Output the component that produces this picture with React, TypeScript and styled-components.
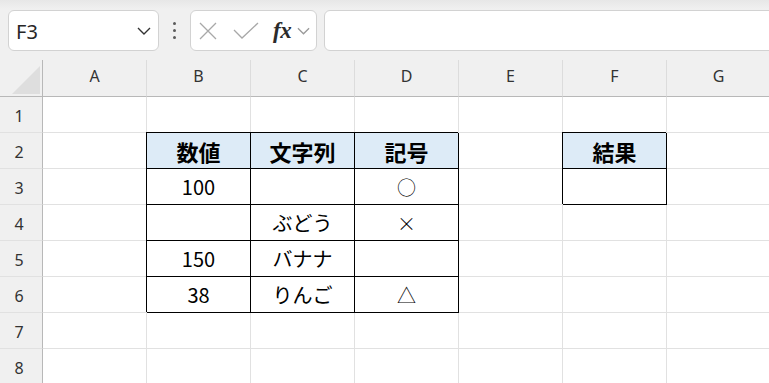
import React from "react"
import styled, { createGlobalStyle } from "styled-components"

const GlobalStyle = createGlobalStyle`
    html, body {
        margin: 0;
        padding: 0;
        background: #ffffff;
        overflow: hidden;
    }
    * { box-sizing: border-box; }
`

const Page = styled.div`
    width: 769px;
    height: 383px;
    overflow: hidden;
    display: flex;
    flex-direction: column;
    background: #f0f0f0;
`

const Toolbar = styled.div`
    height: 60px;
    flex: none;
    display: flex;
    align-items: center;
    padding: 0 0 0 8px;
    background: linear-gradient(#e7e7e7 0, #f0f0f0 9px);
`

const Box = styled.div`
    height: 41px;
    margin-top: 1px;
    background: #ffffff;
    border: 1px solid #d2d2d2;
    border-radius: 6px;
    display: flex;
    align-items: center;
`

const NameBox = styled(Box)`
    width: 151px;
    padding: 0 7px 0 7px;
    justify-content: space-between;

    span {
        font-family: "Noto Sans", "Open Sans", sans-serif;
        font-size: 20px;
        color: #262626;
        line-height: 1;
        margin-top: 2px;
    }
`

const Dots = styled.div`
    width: 31px;
    display: flex;
    flex-direction: column;
    align-items: center;
    gap: 4px;
    margin-top: 1px;

    i {
        width: 3px;
        height: 3px;
        border-radius: 50%;
        background: #5a5a5a;
    }
`

const FuncBox = styled(Box)`
    width: 127px;
    padding: 0 0 0 8px;
`

const Fx = styled.span`
    font-family: "Liberation Serif", "DejaVu Serif", serif;
    font-style: italic;
    font-weight: bold;
    font-size: 23px;
    color: #2b2b2b;
    margin: 0 6px 0 14px;
    line-height: 1;
    letter-spacing: -0.5px;
`

const FormulaBar = styled(Box)`
    flex: 1;
    margin-left: 7px;
    margin-right: -10px;
`

const Sheet = styled.div`
    display: grid;
    grid-template-columns: 43px repeat(7, 104px);
    grid-template-rows: 37px repeat(8, 36px);
    background: #ffffff;
`

const Corner = styled.div`
    background: #f0f0f0;
    border-right: 1px solid #b8b8b8;
    border-bottom: 1px solid #b8b8b8;
    display: flex;
    align-items: flex-end;
    justify-content: flex-end;
    padding: 0 2px 2px 0;

    &::after {
        content: "";
        width: 28px;
        height: 28px;
        background: #dedede;
        clip-path: polygon(100% 0, 100% 100%, 0 100%);
    }
`

const ColHead = styled.div`
    background: #f0f0f0;
    border-right: 1px solid #dcdcdc;
    border-bottom: 1px solid #b8b8b8;
    display: flex;
    align-items: center;
    justify-content: center;
    padding-bottom: 5px;
    font-family: "Noto Sans", "Open Sans", sans-serif;
    font-size: 16px;
    color: #333333;
`

const RowHead = styled.div`
    background: #f0f0f0;
    border-right: 1px solid #b8b8b8;
    border-bottom: 1px solid #e1e1e1;
    display: flex;
    align-items: center;
    justify-content: center;
    padding: 3px 4px 0 0;
    font-family: "Noto Sans", "Open Sans", sans-serif;
    font-size: 16px;
    color: #333333;
`

const Cell = styled.div<{ $head?: boolean; $box?: boolean }>`
    border-right: 1px solid ${({ $box }) => ($box ? "#000000" : "#e1e1e1")};
    border-bottom: 1px solid ${({ $box }) => ($box ? "#000000" : "#e1e1e1")};
    background: ${({ $head }) => ($head ? "#ddebf7" : "#ffffff")};
    box-shadow: ${({ $box }) => ($box ? "-1px -1px 0 0 #000000" : "none")};
    position: ${({ $box }) => ($box ? "relative" : "static")};
    z-index: ${({ $box }) => ($box ? 1 : "auto")};
    display: flex;
    align-items: center;
    justify-content: center;
    font-family: "Noto Sans CJK JP", "Noto Sans", sans-serif;
    font-size: ${({ $head }) => ($head ? "22px" : "20px")};
    font-weight: ${({ $head }) => ($head ? 700 : 400)};
    color: #000000;
    white-space: nowrap;
`

const Mark = styled.span<{ $light?: boolean }>`
    font-weight: ${({ $light }) => ($light ? 300 : 400)};
    font-size: ${({ $light }) => ($light ? "19px" : "20px")};
`

type CellData = { v?: string; head?: boolean; box?: boolean; mark?: boolean }

const cols = ["A", "B", "C", "D", "E", "F", "G"]

const e: CellData = {}
const rows: CellData[][] = [
    [e, e, e, e, e, e, e],
    [e, { v: "数値", head: true, box: true }, { v: "文字列", head: true, box: true }, { v: "記号", head: true, box: true }, e, { v: "結果", head: true, box: true }, e],
    [e, { v: "100", box: true }, { box: true }, { v: "○", box: true, mark: true }, e, { box: true }, e],
    [e, { box: true }, { v: "ぶどう", box: true }, { v: "×", box: true, mark: true }, e, e, e],
    [e, { v: "150", box: true }, { v: "バナナ", box: true }, { box: true }, e, e, e],
    [e, { v: "38", box: true }, { v: "りんご", box: true }, { v: "△", box: true, mark: true }, e, e, e],
    [e, e, e, e, e, e, e],
    [e, e, e, e, e, e, e],
]

function Chevron({ color, width }: { color: string; width: number }) {
    return (
        <svg width={width} height="8" viewBox="0 0 14 8">
            <polyline points="1,1 7,7 13,1" fill="none" stroke={color} strokeWidth="1.4" />
        </svg>
    )
}

export default function App() {
    return (
        <>
            <GlobalStyle />
            <Page>
                <Toolbar>
                    <NameBox>
                        <span>F3</span>
                        <Chevron color="#333333" width={14} />
                    </NameBox>
                    <Dots><i /><i /><i /></Dots>
                    <FuncBox>
                        <svg width="18" height="18" viewBox="0 0 18 18">
                            <path d="M1 1 L17 17 M17 1 L1 17" stroke="#a8a8a8" strokeWidth="1.3" />
                        </svg>
                        <svg width="26" height="18" viewBox="0 0 26 18" style={{ marginLeft: 16 }}>
                            <polyline points="1,8 9,16 25,1" fill="none" stroke="#a8a8a8" strokeWidth="1.3" />
                        </svg>
                        <Fx>fx</Fx>
                        <Chevron color="#9a9a9a" width={13} />
                    </FuncBox>
                    <FormulaBar />
                </Toolbar>
                <Sheet>
                    <Corner />
                    {cols.map(c => <ColHead key={c}>{c}</ColHead>)}
                    {rows.map((r, i) => (
                        <React.Fragment key={i}>
                            <RowHead>{i + 1}</RowHead>
                            {r.map((c, j) => (
                                <Cell key={j} $head={c.head} $box={c.box}>
                                    {c.mark ? <Mark $light>{c.v}</Mark> : c.v}
                                </Cell>
                            ))}
                        </React.Fragment>
                    ))}
                </Sheet>
            </Page>
        </>
    )
}
